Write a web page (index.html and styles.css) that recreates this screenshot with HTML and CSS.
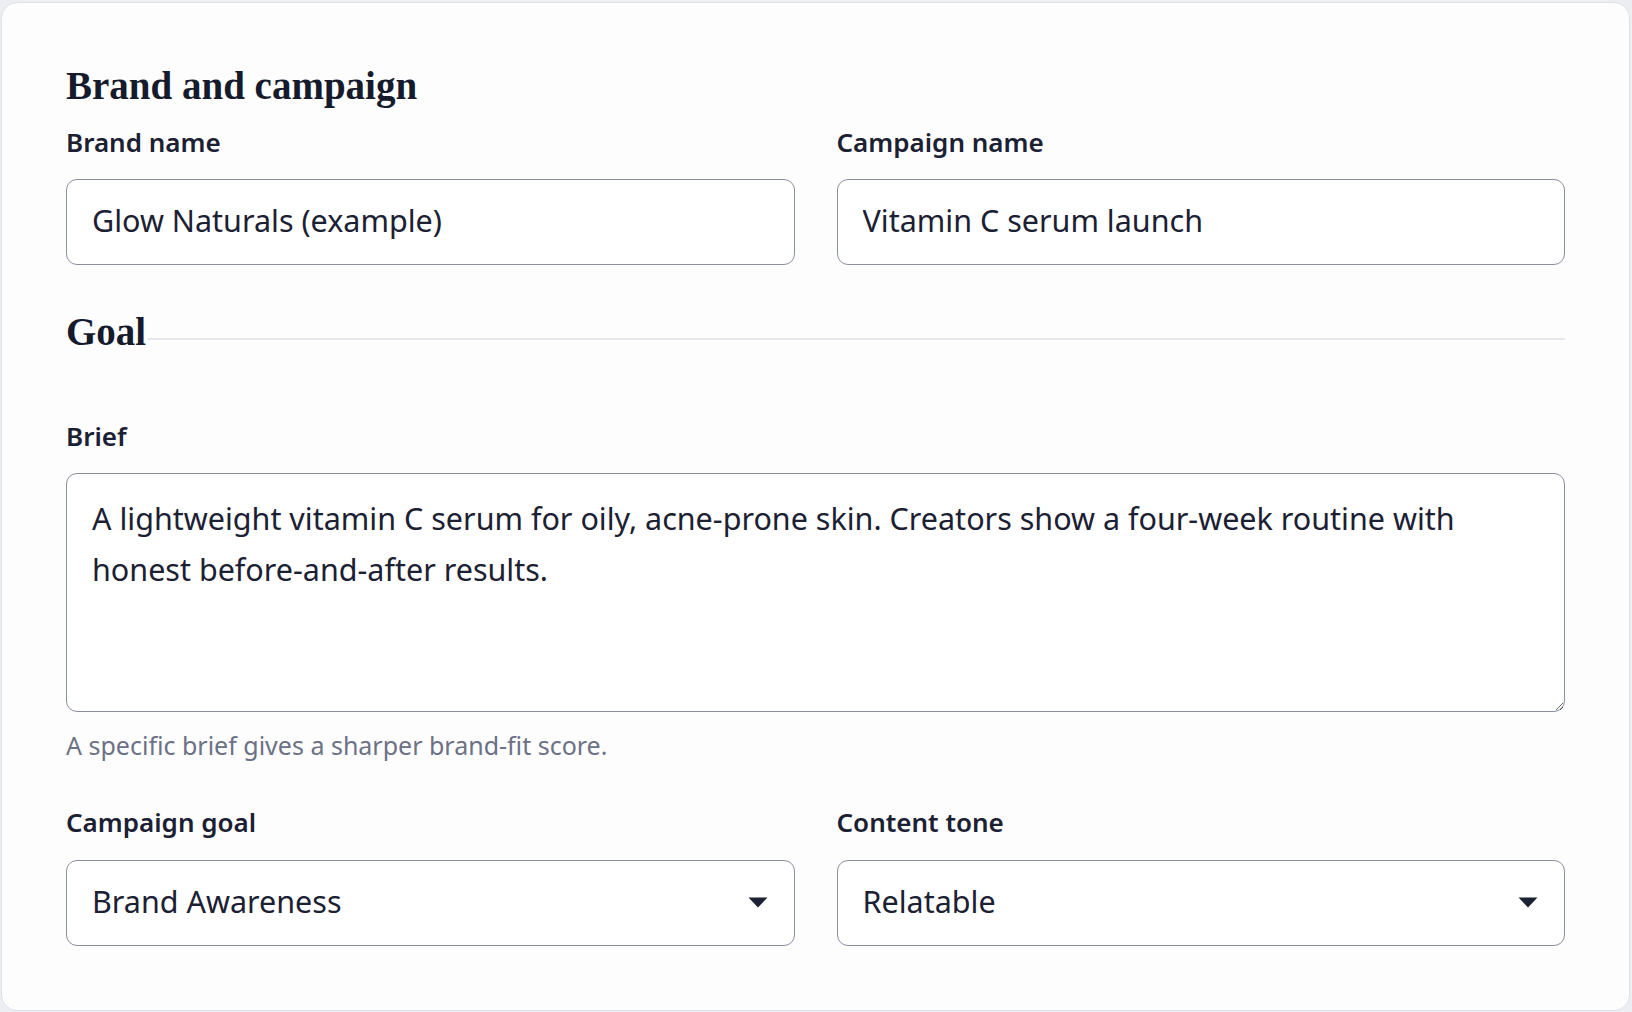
FILE: index.html
```html
<!DOCTYPE html>
<html lang="en">
<head>
<meta charset="utf-8">
<title>Campaign setup</title>
<link rel="stylesheet" href="styles.css">
</head>
<body>
<main class="card">
  <section class="section">
    <h2 class="section-title">Brand and campaign</h2>
    <div class="two-col">
      <div class="field">
        <label class="label" for="brand">Brand name</label>
        <input class="control" id="brand" type="text" value="Glow Naturals (example)">
      </div>
      <div class="field">
        <label class="label" for="campaign">Campaign name</label>
        <input class="control" id="campaign" type="text" value="Vitamin C serum launch">
      </div>
    </div>
  </section>

  <section class="section section-goal">
    <h2 class="section-title with-rule">Goal</h2>
    <div class="field">
      <label class="label" for="brief">Brief</label>
      <textarea class="control textarea" id="brief">A lightweight vitamin C serum for oily, acne-prone skin. Creators show a four-week routine with honest before-and-after results.</textarea>
    </div>
    <p class="hint">A specific brief gives a sharper brand-fit score.</p>
    <div class="two-col two-col-selects">
      <div class="field">
        <label class="label" for="goal">Campaign goal</label>
        <div class="select-wrap">
          <select class="control select" id="goal">
            <option>Brand Awareness</option>
            <option>Conversions</option>
            <option>Engagement</option>
          </select>
          <svg class="select-arrow" width="20" height="11" viewBox="0 0 20 11" aria-hidden="true"><path d="M0.5 0.5 H19.5 L10 10.5 Z" fill="#1b2033"/></svg>
        </div>
      </div>
      <div class="field">
        <label class="label" for="tone">Content tone</label>
        <div class="select-wrap">
          <select class="control select" id="tone">
            <option>Relatable</option>
            <option>Educational</option>
            <option>Playful</option>
          </select>
          <svg class="select-arrow" width="20" height="11" viewBox="0 0 20 11" aria-hidden="true"><path d="M0.5 0.5 H19.5 L10 10.5 Z" fill="#1b2033"/></svg>
        </div>
      </div>
    </div>
  </section>
</main>
</body>
</html>
```
FILE: styles.css
```css
html, body {
  margin: 0;
}
body {
  background: #eceef3;
  padding: 2px 2px 2px 1px;
  font-family: "Noto Sans", "Open Sans", sans-serif;
  color: #1b2033;
}
.card {
  background: #fdfdfe;
  border: 1px solid #dde1ea;
  border-radius: 16px;
  padding: 60px 64px 64px 64px;
}
.section-title {
  margin: 0 0 14px 0;
  font-family: "Liberation Serif", "Times New Roman", serif;
  font-weight: 700;
  font-size: 39px;
  line-height: 46.8px;
  color: #151a2c;
  letter-spacing: 0;
}
.section-goal {
  margin-top: 44px;
}
.with-rule {
  display: flex;
  align-items: center;
  margin-bottom: 62px;
}
.with-rule::after {
  content: "";
  flex: 1;
  height: 2px;
  margin-left: 2px;
  margin-top: 13px;
  background: #e6e8ee;
}
.two-col {
  display: grid;
  grid-template-columns: 1fr 1fr;
  column-gap: 42px;
}
.two-col-selects {
  margin-top: 41px;
}
.field {
  display: flex;
  flex-direction: column;
  gap: 19px;
  min-width: 0;
}
.label {
  font-size: 26px;
  font-weight: 600;
  line-height: 36.4px;
  color: #1b2033;
}
.control {
  box-sizing: border-box;
  width: 100%;
  margin: 0;
  font-family: "Noto Sans", "Open Sans", sans-serif;
  font-size: 30.5px;
  color: #1b2033;
  background: #ffffff;
  border: 1.5px solid #8b90a1;
  border-radius: 11px;
  outline: none;
}
input.control {
  height: 86px;
  padding: 0 26px 4px 25px;
}
.textarea {
  display: block;
  height: 239px;
  padding: 19px 26px 18px 25px;
  line-height: 51px;
  resize: vertical;
}
.hint {
  margin: 16px 0 0 0;
  font-size: 25px;
  line-height: 35px;
  color: #6b7186;
}
.select-wrap {
  position: relative;
}
.select {
  display: block;
  height: 86px;
  padding: 0 64px 4px 25px;
  appearance: none;
  -webkit-appearance: none;
  cursor: pointer;
}
.select-arrow {
  position: absolute;
  right: 27px;
  top: 37px;
  pointer-events: none;
}
```
